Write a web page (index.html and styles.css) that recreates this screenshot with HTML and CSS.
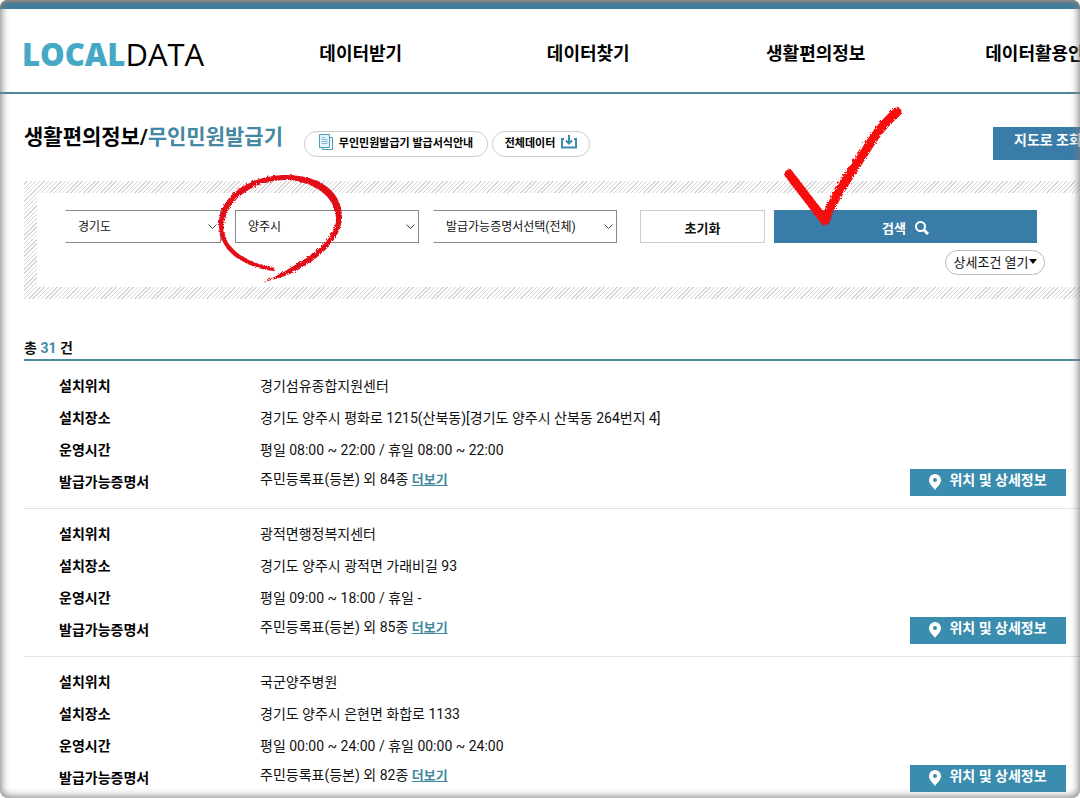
FILE: index.html
```html
<!DOCTYPE html>
<html lang="ko">
<head>
  <meta charset="UTF-8" />
  <meta name="viewport" content="width=device-width, initial-scale=1.0" />
  <title>LOCALDATA - 무인민원발급기</title>
  <link rel="stylesheet" href="styles.css">
</head>
<body>
  <div class="page">
    <header class="header">
      <a class="logo" href="#"><b>LOCAL</b>DATA</a>
      <nav class="nav">
        <a href="#">데이터받기</a>
        <a href="#">데이터찾기</a>
        <a href="#">생활편의정보</a>
        <a href="#">데이터활용안내</a>
      </nav>
    </header>

    <main class="content">
      <div class="title-row">
        <h1>생활편의정보/<span>무인민원발급기</span></h1>
        <a class="pill pill-form" href="#">
          <svg width="14" height="16" viewBox="0 0 14 16" fill="none" stroke="#4a9fb5">
            <path d="M3.5 13.5V15.5H13.5V3.5H10.5" />
            <path d="M.5 .5H10.5V13.5H.5Z" fill="#e2f4f7" />
            <path d="M2.5 3.5H6M2.5 5.5H8.5M2.5 7.5H8.5M2.5 9.5H8.5" stroke="#7dbfce" />
          </svg>
          무인민원발급기 발급서식안내
        </a>
        <a class="pill pill-all" href="#">
          전체데이터
          <svg width="16" height="14" viewBox="0 0 16 14" fill="none" stroke="#3b8dab" stroke-width="2">
            <path d="M3 4H1V12.500H15V4H13M8 0V8M5 5.500L8 8.500L11 5.500" />
          </svg>
        </a>
        <a class="map-btn" href="#">지도로 조회</a>
      </div>

      <form class="search">
        <div class="search-inner">
          <div class="fields">
            <select class="open" aria-label="시도"><option>경기도</option></select>
            <select aria-label="시군구"><option>양주시</option></select>
            <select class="open" aria-label="발급가능증명서"><option>발급가능증명서선택(전체)</option></select>
            <button class="reset" type="reset">초기화</button>
            <button class="submit" type="button">
              검색
              <svg width="14" height="14" viewBox="0 0 14 14" fill="none" stroke="#fff" stroke-width="2">
                <circle cx="5.500" cy="5.500" r="4.500" />
                <path d="M9 9L13 13" stroke-width="3" />
              </svg>
            </button>
          </div>
          <button class="detail" type="button">상세조건 열기<svg width="8" height="5" viewBox="0 0 8 5"><path d="M0 0H8L4 5Z" /></svg></button>
        </div>
        <!-- hand drawn marks -->
        <svg class="mark circle" width="130" height="110" viewBox="0 0 130 110" fill="#e20a12">
          <filter id="rough"><feTurbulence baseFrequency=".4" numOctaves="2" /><feDisplacementMap in="SourceGraphic" scale="3" /></filter>
          <g filter="url(#rough)">
            <path d="M58 97C35 95 4 83 2 53C0 26 28 1 70 1C98 1 126 15 125 44C124 68 96 89 75 99C64 104 55 106 46 108C56 104 64 100 73 94C92 84 119 66 119 45C119 22 96 7 68 6C33 7 8 28 7 53C7 78 36 91 58 94Z" />
          </g>
        </svg>
        <svg class="mark check" width="120" height="120" viewBox="0 0 120 120" fill="none" stroke="#f80808" stroke-linecap="round" stroke-linejoin="round">
          <path filter="url(#rough)" d="M6 69L42 116C50 92 74 60 90 34C98 22 106 14 114 7" stroke-width="9" />
        </svg>
      </form>

      <p class="total">총 <span>31</span> 건</p>
      <ul class="list">
        <li>
          <dl>
            <dt>설치위치</dt><dd>경기섬유종합지원센터</dd>
            <dt>설치장소</dt><dd>경기도 양주시 평화로 1215(산북동)[경기도 양주시 산북동 264번지 4]</dd>
            <dt>운영시간</dt><dd>평일 08:00 ~ 22:00 / 휴일 08:00 ~ 22:00</dd>
            <dt>발급가능증명서</dt><dd class="docs">주민등록표(등본) 외 84종 <a href="#">더보기</a></dd>
          </dl>
          <a class="place-btn" href="#">
            <svg width="12" height="16" viewBox="0 0 12 16"><path fill="#fff" fill-rule="evenodd" d="M6 0A6 6 0 0 0 0 6C0 10 4 13 6 16C8 13 12 10 12 6A6 6 0 0 0 6 0ZM6 4A2 2 0 1 1 6 8A2 2 0 1 1 6 4Z" /></svg>
            위치 및 상세정보
          </a>
        </li>
        <li>
          <dl>
            <dt>설치위치</dt><dd>광적면행정복지센터</dd>
            <dt>설치장소</dt><dd>경기도 양주시 광적면 가래비길 93</dd>
            <dt>운영시간</dt><dd>평일 09:00 ~ 18:00 / 휴일 -</dd>
            <dt>발급가능증명서</dt><dd class="docs">주민등록표(등본) 외 85종 <a href="#">더보기</a></dd>
          </dl>
          <a class="place-btn" href="#">
            <svg width="12" height="16" viewBox="0 0 12 16"><path fill="#fff" fill-rule="evenodd" d="M6 0A6 6 0 0 0 0 6C0 10 4 13 6 16C8 13 12 10 12 6A6 6 0 0 0 6 0ZM6 4A2 2 0 1 1 6 8A2 2 0 1 1 6 4Z" /></svg>
            위치 및 상세정보
          </a>
        </li>
        <li>
          <dl>
            <dt>설치위치</dt><dd>국군양주병원</dd>
            <dt>설치장소</dt><dd>경기도 양주시 은현면 화합로 1133</dd>
            <dt>운영시간</dt><dd>평일 00:00 ~ 24:00 / 휴일 00:00 ~ 24:00</dd>
            <dt>발급가능증명서</dt><dd class="docs">주민등록표(등본) 외 82종 <a href="#">더보기</a></dd>
          </dl>
          <a class="place-btn" href="#">
            <svg width="12" height="16" viewBox="0 0 12 16"><path fill="#fff" fill-rule="evenodd" d="M6 0A6 6 0 0 0 0 6C0 10 4 13 6 16C8 13 12 10 12 6A6 6 0 0 0 6 0ZM6 4A2 2 0 1 1 6 8A2 2 0 1 1 6 4Z" /></svg>
            위치 및 상세정보
          </a>
        </li>
      </ul>
    </main>
  </div>
  <div class="frame"></div>
</body>
</html>
```
FILE: styles.css
```css
* {
  box-sizing: border-box;
}
html {
  overflow: hidden;
}
body {
  margin: 0;
  height: 100vh;
  overflow: hidden;
  background: #fff;
  color: #111;
  font-family: Roboto, 'Noto Sans CJK KR', sans-serif;
  font-size: 14px;
}
a {
  color: inherit;
  text-decoration: none;
}
button, select {
  font-family: inherit;
  color: #111;
}
/* desktop layout, wider than small windows */
.page {
  min-width: 1157px;
  border-top: 9px solid #3c7f9f;
}
.header {
  display: flex;
  align-items: center;
  height: 85px;
  border-bottom: 2px solid #4f8797;
}
.logo {
  width: 247px;
  padding: 6px 0 0 22px;
  font-family: 'Open Sans', sans-serif;
  font-size: 31px;
  line-height: 40px;
  color: #000;
}
.logo b {
  font-weight: 800;
  color: #45a9c6;
}
.nav {
  flex: 1;
  display: grid;
  grid-template-columns: repeat(4, 1fr);
  text-align: center;
  font-size: 18px;
  font-weight: bold;
  color: #000;
  padding-top: 2px;
}
.content {
  padding-left: 24px;
}
.title-row {
  display: flex;
  align-items: center;
  height: 87px;
}
h1 {
  margin: 0;
  padding-bottom: 2px;
  font-size: 21px;
  line-height: 32px;
  width: 280px;
  color: #000;
}
h1 span {
  color: #4488a3;
}
.pill {
  display: flex;
  align-items: center;
  justify-content: center;
  gap: 6px;
  height: 26px;
  margin-top: 12px;
  padding-bottom: 3px;
  border: 1px solid #ccc;
  border-radius: 13px;
  font-size: 11px;
  font-weight: bold;
  color: #000;
}
.pill-form {
  width: 184px;
  margin-right: 4px;
}
.pill-all {
  width: 98px;
}
.map-btn {
  margin: 12px 0 0 auto;
  width: 164px;
  height: 33px;
  padding-left: 21px;
  background: #397ca8;
  color: #fff;
  font-weight: bold;
  line-height: 26px;
}
.search {
  position: relative;
  padding: 12px 0 12px 13px;
  background: repeating-linear-gradient(135deg, #fff 0 2px, #d6d6d6 2px 3px);
}
.search-inner {
  background: #fff;
  height: 94px;
  padding: 17px 0 0 28px;
}
.fields {
  display: flex;
}
select {
  appearance: none;
  width: 184px;
  height: 33px;
  margin-right: 14px;
  padding: 1px 12px 0;
  border: 1px solid #888;
  border-radius: 0;
  font-size: 12px;
  background: #fff url("data:image/svg+xml,%3Csvg xmlns='http://www.w3.org/2000/svg' width='9' height='6' fill='none' stroke='%23444'%3E%3Cpath d='M.5 .5L4.5 4.5L8.5 .5'/%3E%3C/svg%3E") no-repeat right 3px center;
}
.fields select:first-child {
  width: 156px;
}
select.open {
  border-left-color: transparent;
}
.reset, .submit {
  height: 33px;
  padding-top: 3px;
  font-size: 13px;
  font-weight: bold;
  border: 1px solid #ccc;
  background: #fff;
}
.reset {
  width: 125px;
  margin: 0 9px;
}
.submit {
  display: flex;
  align-items: center;
  justify-content: center;
  gap: 9px;
  width: 263px;
  background: #397ca8;
  border-color: #397ca8;
  color: #fff;
}
.detail {
  display: flex;
  align-items: center;
  justify-content: center;
  width: 100px;
  height: 25px;
  margin: 7px 0 0 880px;
  padding: 0 0 2px;
  border: 1px solid #bbb;
  border-radius: 13px;
  background: #fff;
  font-size: 13px;
}
.mark {
  position: absolute;
  pointer-events: none;
  overflow: visible;
}
.circle {
  left: 192px;
  top: -8px;
}
.check {
  left: 758px;
  top: -77px;
}
.total {
  margin: 38px 0 0;
  font-size: 14px;
  font-weight: bold;
  line-height: 22px;
  border-bottom: 2px solid #4f8ba0;
}
.total span {
  color: #4488a3;
}
.list {
  margin: 0;
  padding: 0;
  list-style: none;
}
.list li {
  display: flex;
  align-items: flex-end;
  height: 148px;
  border-bottom: 1px solid #e2e2e2;
}
dl {
  display: grid;
  grid-template-columns: 201px 1fr;
  grid-auto-rows: 32px;
  width: 886px;
  margin: 0;
  padding-left: 35px;
  height: 138px;
  line-height: 32px;
}
dt {
  font-weight: bold;
  color: #000;
}
dd {
  margin: 0;
}
.docs {
  line-height: 26px;
}
.docs a {
  font-size: 13px;
  font-weight: bold;
  color: #4488a3;
  text-decoration: underline;
}
.place-btn {
  display: flex;
  justify-content: center;
  gap: 8px;
  width: 156px;
  height: 27px;
  margin-bottom: 12px;
  background: #3a8dae;
  color: #fff;
  font-weight: bold;
  line-height: 22px;
}
.place-btn svg {
  margin-top: 5px;
}
/* shaded rounded edge around the window */
.frame {
  position: fixed;
  inset: 0;
  border-radius: 8px;
  box-shadow: inset 0 0 8px 1px #777, inset 0 2px 1px #999, 0 0 0 8px #fff;
  pointer-events: none;
}
```
